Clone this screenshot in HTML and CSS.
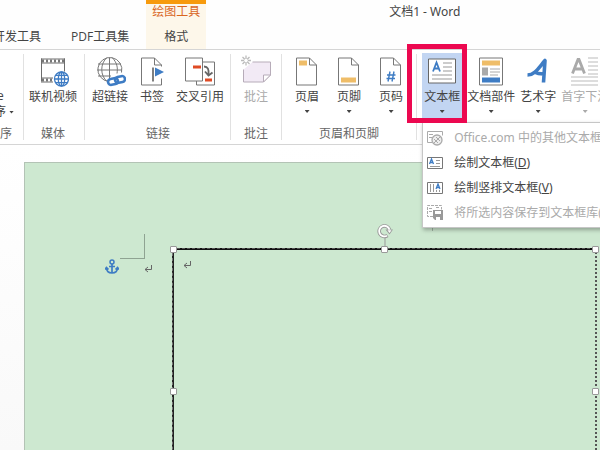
FILE: index.html
```html
<!DOCTYPE html>
<html lang="zh-CN">
<head>
    <meta charset="UTF-8">
    <meta name="viewport" content="width=device-width, initial-scale=1.0">
    <title>文档1 - Word</title>
    <link rel="stylesheet" href="styles.css">
</head>
<body>
    <!-- Title bar and tabs -->
    <header class="title-bar">
        <nav class="tabs">
            <a class="tab" href="#">开发工具</a>
            <a class="tab" href="#">PDF工具集</a>
        </nav>
        <div class="context-tab">
            <span class="context-title">绘图工具</span>
            <a class="tab" href="#">格式</a>
        </div>
        <div class="doc-title">文档1 - Word</div>
    </header>

    <!-- Ribbon -->
    <div class="ribbon">
        <section class="group group-apps">
            <div class="tools">
                <button class="tool" type="button"><span class="label">e</span><span class="label with-caret">序<i class="caret"></i></span></button>
            </div>
            <div class="group-name">序</div>
        </section>

        <section class="group group-media">
            <div class="tools">
                <button class="tool" type="button">
                    <svg class="icon" viewBox="0 0 32 34">
                        <path d="M4.500 5v23M27.500 5v13M4 5.500h24M4 9.500h24M4 24.500h12M4 28.500h12" fill="none" stroke="#6d6d6d"/>
                        <path d="M5 7.500h22M5 26.500h11" stroke="#777" stroke-width="3" stroke-dasharray="2 2"/>
                        <g fill="none" stroke="#3e7cc4" stroke-width="1.300">
                            <circle cx="24.500" cy="25.500" r="7"/>
                            <ellipse cx="24.500" cy="25.500" rx="3.200" ry="7"/>
                            <path d="M24.500 18.500v14M17.500 25.500h14M18.700 21.800h11.600M18.700 29.200h11.600"/>
                        </g>
                    </svg>
                    <span class="label">联机视频</span>
                </button>
            </div>
            <div class="group-name">媒体</div>
        </section>

        <section class="group group-links">
            <div class="tools">
                <button class="tool" type="button">
                    <svg class="icon" viewBox="0 0 32 34">
                        <g fill="none" stroke="#777">
                            <path d="M15 28a12 12 0 1 1 12.500-9"/>
                            <path d="M13 28C6 22 6 10 13 4M15.500 4v22M18 4c5 5 6 10 5 16M4 10.500h23M3 16.500h25M4 22.500h13"/>
                        </g>
                        <g fill="none" stroke="#3e7cc4" stroke-width="2.600">
                            <rect x="14" y="25" width="10" height="6" rx="3" transform="rotate(-12 19 28)"/>
                            <rect x="21" y="23" width="10" height="6" rx="3" transform="rotate(-12 26 26)"/>
                        </g>
                    </svg>
                    <span class="label">超链接</span>
                </button>
                <button class="tool" type="button">
                    <svg class="icon" viewBox="0 0 32 34">
                        <path d="M5.500 4.500h13l7 7v20h-20z" fill="#fff" stroke="#777"/>
                        <path d="M18.500 4.500v7h7" fill="none" stroke="#777"/>
                        <path d="M17 14v15" stroke="#fff" stroke-width="4"/>
                        <path d="M25.500 13v12" stroke="#fff" stroke-width="3"/>
                        <path d="M17 14v14" stroke="#555" stroke-width="1.500"/>
                        <path d="M19 14l9 4.500-9 4.500z" fill="#3e7cc4"/>
                    </svg>
                    <span class="label">书签</span>
                </button>
                <button class="tool" type="button">
                    <svg class="icon" viewBox="0 0 32 34">
                        <path d="M12.500 8.500h18v23h-18z" fill="#fff" stroke="#777"/>
                        <path d="M1.500 4.500h17v23h-17z" fill="#fff" stroke="#777"/>
                        <path d="M9 13.500h8M21 26.500h7" stroke="#df4b25" stroke-width="3"/>
                        <path d="M20 13c4 0 5 3 4.500 8M21 18l3.500 4 4-3" fill="none" stroke="#666" stroke-width="1.800"/>
                    </svg>
                    <span class="label">交叉引用</span>
                </button>
            </div>
            <div class="group-name">链接</div>
        </section>

        <section class="group group-comments">
            <div class="tools">
                <button class="tool" type="button" disabled>
                    <svg class="icon" viewBox="0 0 32 34">
                        <path d="M3.500 16v12.500h20l7-7v-13h-18" fill="#f2eaf5" stroke="#b7acb9"/>
                        <path d="M23.500 28.500v-7h7z" fill="#fff" stroke="#b7acb9"/>
                        <path d="M6 2v10M1 7h10M2.500 3.500l7 7M9.500 3.500l-7 7" stroke="#bbb" stroke-width="1.300"/>
                        <circle cx="6" cy="7" r="1.800" fill="#fff"/>
                    </svg>
                    <span class="label">批注</span>
                </button>
            </div>
            <div class="group-name">批注</div>
        </section>

        <section class="group group-header">
            <div class="tools">
                <button class="tool" type="button">
                    <svg class="icon" viewBox="0 0 32 34">
                        <path d="M5.500 4.500h13l7 7v20h-20z" fill="#fff" stroke="#777"/>
                        <path d="M18.500 4.500v7h7" fill="none" stroke="#777"/>
                        <path d="M8 7h8v5h-8z" fill="#efbd68"/>
                    </svg>
                    <span class="label">页眉</span>
                    <i class="caret"></i>
                </button>
                <button class="tool" type="button">
                    <svg class="icon" viewBox="0 0 32 34">
                        <path d="M5.500 4.500h13l7 7v20h-20z" fill="#fff" stroke="#777"/>
                        <path d="M18.500 4.500v7h7" fill="none" stroke="#777"/>
                        <path d="M8 24h15v5h-15z" fill="#efbd68"/>
                    </svg>
                    <span class="label">页脚</span>
                    <i class="caret"></i>
                </button>
                <button class="tool" type="button">
                    <svg class="icon" viewBox="0 0 32 34">
                        <path d="M5.500 4.500h13l7 7v20h-20z" fill="#fff" stroke="#777"/>
                        <path d="M18.500 4.500v7h7" fill="none" stroke="#777"/>
                        <path d="M15 18l-2 10M19 18l-2 10M12 21.500h8.500M11.500 25h8.500" stroke="#3e7cc4" stroke-width="1.400"/>
                    </svg>
                    <span class="label">页码</span>
                    <i class="caret"></i>
                </button>
            </div>
            <div class="group-name">页眉和页脚</div>
        </section>

        <section class="group group-text">
            <div class="tools">
                <div class="dropdown">
                    <button class="tool active" type="button">
                        <svg class="icon" viewBox="0 0 32 34">
                            <path d="M2.500 5.500h27v24h-27z" fill="#fff" stroke="#666"/>
                            <path d="M7 18l3.500-9 3.500 9M8.200 15h4.600" fill="none" stroke="#3e7cc4" stroke-width="1.800"/>
                            <path d="M17 9.500h9M17 13.500h9M17 17.500h9M6 21.500h20M6 25.500h20" stroke="#999"/>
                        </svg>
                        <span class="label">文本框</span>
                        <i class="caret"></i>
                    </button>
                    <div class="menu">
                        <button class="menu-item" type="button" disabled>
                            <svg class="menu-icon" viewBox="0 0 16 16">
                                <path d="M5 12.500H.500v-11h15v4M2 4.500h4M2 7.500h3" fill="none" stroke="#aaa"/>
                                <circle cx="10" cy="10" r="5" fill="#eee" stroke="#aaa" stroke-width="1.300"/>
                                <path d="M7 13l6-6M7 9l4 4M9 7l4 4" stroke="#aaa"/>
                            </svg>
                            Office.com 中的其他文本框(M)
                        </button>
                        <button class="menu-item" type="button">
                            <svg class="menu-icon" viewBox="0 0 16 16">
                                <path d="M.500 2.500h15v11h-15z" fill="#fff" stroke="#777"/>
                                <path d="M2.500 9l2-5 2 5M3.300 7.500h2.400" fill="none" stroke="#3e7cc4" stroke-width="1.300"/>
                                <path d="M9 5.500h4M9 8.500h4M3 11.500h10" stroke="#999"/>
                            </svg>
                            <span>绘制文本框(<u>D</u>)</span>
                        </button>
                        <button class="menu-item" type="button">
                            <svg class="menu-icon" viewBox="0 0 16 16">
                                <path d="M.500 2.500h15v11h-15z" fill="#fff" stroke="#777"/>
                                <path d="M9 9l2-5 2 5M9.800 7.500h2.400" fill="none" stroke="#3e7cc4" stroke-width="1.300"/>
                                <path d="M3.500 4v8M6.500 4v8M9.500 10v2M12.500 10v2" stroke="#999"/>
                            </svg>
                            <span>绘制竖排文本框(<u>V</u>)</span>
                        </button>
                        <button class="menu-item" type="button" disabled>
                            <svg class="menu-icon" viewBox="0 0 16 16">
                                <path d="M6 11.500H.500v-11h14v4M2 3.500h4M2 6.500h3M9 2.500h3" fill="none" stroke="#aaa" stroke-dasharray="3 1"/>
                                <path d="M6 5h10v10H8l-2-2z" fill="#999"/>
                                <path d="M8 6h6v3h-6zM9 12h4v3h-4z" fill="#fff"/>
                            </svg>
                            将所选内容保存到文本框库(S)
                        </button>
                    </div>
                    <span class="highlight"></span>
                </div>
                <button class="tool" type="button">
                    <svg class="icon" viewBox="0 0 32 34">
                        <path d="M4.500 4.500h23v27h-23z" fill="#fff" stroke="#777"/>
                        <path d="M7 7h18v5h-18z" fill="#efbd68"/>
                        <path d="M7 14h6v8h-6z" fill="#aaa"/>
                        <path d="M15 15.500h10M15 18.500h10M15 21.500h8" stroke="#aaa"/>
                        <path d="M7 24h18v5h-18z" fill="#3e7cc4"/>
                    </svg>
                    <span class="label">文档部件</span>
                    <i class="caret"></i>
                </button>
                <button class="tool" type="button">
                    <svg class="icon" viewBox="0 0 32 34">
                        <path d="M5.500 21.500c7 0 11-7 17.500-14.500L21.500 29M12 18.500c3 1.500 6 2 9.500 2" fill="none" stroke="#3e7cc4" stroke-width="3.600" stroke-linejoin="round"/>
                    </svg>
                    <span class="label">艺术字</span>
                    <i class="caret"></i>
                </button>
                <button class="tool" type="button" disabled>
                    <svg class="icon" viewBox="0 0 32 34">
                        <path d="M3.500 20l5.500-14h1l5.500 14M5.500 15.500h8" fill="none" stroke="#aaa" stroke-width="2.800"/>
                        <path d="M19 4.500h10M19 8.500h10M19 12.500h10M19 16.500h10M19 20.500h10M2 23.500h27M2 27.500h27M2 31.500h27" stroke="#bbb"/>
                    </svg>
                    <span class="label">首字下沉</span>
                    <i class="caret"></i>
                </button>
            </div>
        </section>
    </div>

    <!-- Document -->
    <main class="workspace">
        <div class="page">
            <span class="crop-mark"></span>
            <span class="crop-tick"></span>
            <svg class="anchor" viewBox="0 0 14 16">
                <circle cx="7" cy="3" r="2" fill="none" stroke="#3e7cc4" stroke-width="1.500"/>
                <path d="M7 5v9M4 7.500h6M1.500 8.500c0 3.500 2 5.500 5.500 5.500s5.500-2 5.500-5.500M0 10.500l1.500-2 2 2M10.500 10.500l2-2 1.500 2" fill="none" stroke="#3e7cc4" stroke-width="1.700"/>
            </svg>
            <svg class="return return-body" viewBox="0 0 8 8">
                <path d="M7.500 0v4.500H1M4 2L1 4.500 4 7" fill="none" stroke="#666"/>
            </svg>
            <div class="text-box">
                <svg class="return return-box" viewBox="0 0 8 8">
                    <path d="M7.500 0v4.500H1M4 2L1 4.500 4 7" fill="none" stroke="#666"/>
                </svg>
                <svg class="rotate" viewBox="0 0 16 24">
                    <path d="M8 14v10" stroke="#999"/>
                    <path d="M10.500 12.500a5.300 5.300 0 1 1 2-6" fill="none" stroke="#999" stroke-width="3.600"/>
                    <path d="M8.500 6.500h7.500l-3.500 5z" fill="#999"/>
                    <path d="M10 12.700a5.300 5.300 0 1 1 2.500-6" fill="none" stroke="#fff" stroke-width="1.800"/>
                    <path d="M10.500 7.300h4l-2 2.700z" fill="#fff"/>
                </svg>
                <span class="handle top left"></span>
                <span class="handle top center"></span>
                <span class="handle top right"></span>
                <span class="handle middle left"></span>
                <span class="handle middle right"></span>
            </div>
        </div>
    </main>
</body>
</html>
```
FILE: styles.css
```css
* {
    box-sizing: border-box;
}

body {
    margin: 0;
    height: 100vh;
    display: flex;
    flex-direction: column;
    overflow: hidden;
    background-color: #fefefe;
    color: #444;
    font-family: "Open Sans", "Noto Sans CJK SC", sans-serif;
    font-size: 12px;
    line-height: 16px;
    white-space: nowrap;
}

button {
    border: none;
    padding: 0;
    background: none;
    color: inherit;
    font: inherit;
}

button:disabled {
    color: #aaa;
}

svg {
    display: block;
    flex-shrink: 0;
}

/* Title bar and tabs */
.title-bar {
    display: flex;
    height: 50px;
    border-bottom: 1px solid #d5d5d5;
}

.tabs {
    display: flex;
    align-items: flex-end;
    gap: 30px;
    margin-left: -7px;
    padding-bottom: 4px;
}

.tab {
    color: #444;
    text-decoration: none;
}

.context-tab {
    display: flex;
    flex-direction: column;
    align-items: center;
    justify-content: space-between;
    width: 60px;
    margin-left: 17px;
    padding-bottom: 4px;
    border-top: 4px solid #f79a0c;
    background-color: #fdf7ea;
}

.context-title {
    color: #d9661f;
}

.doc-title {
    margin-left: 183px;
    padding-top: 4px;
    font-family: "Noto Sans", "Noto Sans CJK SC", sans-serif;
}

/* Ribbon */
.ribbon {
    display: flex;
    height: 95px;
    border-bottom: 1px solid #d5d5d5;
    background-color: #fff;
}

.group {
    position: relative;
    display: flex;
    flex-direction: column;
    flex-shrink: 0;
    justify-content: space-between;
    padding: 3px 6px 2px;
}

.group::after {
    content: "";
    position: absolute;
    top: 4px;
    right: 0;
    bottom: 4px;
    width: 1px;
    background-color: #e1e1e1;
}

.group-name {
    text-align: center;
    color: #666;
}

.tools {
    display: flex;
    gap: 12px;
}

.tool {
    display: flex;
    flex-direction: column;
    align-items: center;
    height: 69px;
}

.icon {
    width: 32px;
    height: 35px;
    margin: 0 -4px 1px;
}

.caret {
    width: 5px;
    height: 3px;
    margin-top: 5px;
    background-color: currentColor;
    clip-path: polygon(0 0, 100% 0, 50% 100%);
}

.group-apps {
    width: 24px;
    padding-left: 0;
}

.group-apps .group-name {
    text-align: left;
}

.group-apps .tool {
    align-items: flex-start;
    padding-top: 35px;
}

.group-apps .label {
    margin-left: -3px;
}

.group-apps .with-caret {
    display: flex;
    align-items: center;
    gap: 3px;
    margin-left: -6px;
}

.with-caret .caret {
    margin-top: 0;
}

.group-media {
    padding-left: 5px;
    padding-right: 8px;
}

.group-links {
    padding-left: 7px;
    padding-right: 7px;
}

.group-comments {
    padding-left: 13px;
    padding-right: 14px;
}

.group-header {
    padding-left: 13px;
    padding-right: 14px;
}

.group-header .tools {
    gap: 18px;
}

.group-text {
    padding-left: 5px;
}

.group-text::after {
    display: none;
}

.group-text .tools {
    gap: 5px;
}

.dropdown {
    position: relative;
}

.active {
    padding: 0 2px;
    background-color: #c2d5f2;
}

.highlight {
    position: absolute;
    z-index: 3;
    top: -9px;
    right: -5px;
    bottom: -1px;
    left: -15px;
    border: 5px solid #ec0850;
}

/* Drop-down menu */
.menu {
    position: absolute;
    z-index: 2;
    top: 69px;
    left: 0;
    width: 220px;
    padding: 2px 0;
    border: 1px solid #c6c6c6;
    background-color: #fff;
    box-shadow: 1px 2px 4px rgba(0, 0, 0, 0.3);
    font-family: "Noto Sans", "Noto Sans CJK SC", sans-serif;
}

.menu-item {
    display: flex;
    align-items: center;
    gap: 11px;
    width: 100%;
    height: 25px;
    padding-left: 4px;
}

.menu-icon {
    width: 16px;
    height: 16px;
}

/* Document */
.workspace {
    flex: 1;
    display: flex;
    min-height: 0;
    padding: 17px 0 0 24px;
    overflow: hidden;
    background: linear-gradient(#fff, #f9f9f9);
}

.page {
    position: relative;
    flex: 1;
    border: 1px solid #b3c3b5;
    border-right: none;
    border-bottom: none;
    background-color: #cde8d0;
}

.crop-mark {
    position: absolute;
    top: 71px;
    left: 95px;
    width: 25px;
    height: 25px;
    border-right: 1px solid #8fa392;
    border-bottom: 1px solid #8fa392;
}

.crop-tick {
    position: absolute;
    top: 60px;
    left: 407px;
    width: 1px;
    height: 8px;
    background-color: #9fb3a2;
}

.anchor {
    position: absolute;
    top: 96px;
    left: 80px;
    width: 14px;
    height: 16px;
}

.return {
    position: absolute;
    width: 8px;
    height: 8px;
}

.return-body {
    top: 102px;
    left: 119px;
}

.return-box {
    top: 11px;
    left: 9px;
}

.text-box {
    position: absolute;
    top: 85px;
    left: 147px;
    width: 425px;
    height: 286px;
    border-top: 2px solid #111;
    border-left: 2px solid #222;
    border-right: 2px dotted #555;
}

/* dashed selection outline beside the frame */
.text-box::before {
    content: "";
    position: absolute;
    inset: -2px 0 0 -2px;
    border-top: 1px dashed #555;
    border-left: 1px dashed #777;
}

.handle {
    position: absolute;
    width: 7px;
    height: 7px;
    border: 1px solid #999;
    border-radius: 1px;
    background-color: #fff;
}

.handle.top {
    top: -4px;
}

.handle.middle {
    top: 138px;
}

.handle.left {
    left: -4px;
}

.handle.center {
    left: 207px;
}

.handle.right {
    right: -4px;
}

.rotate {
    position: absolute;
    top: -27px;
    left: 203px;
    width: 16px;
    height: 24px;
}
```
